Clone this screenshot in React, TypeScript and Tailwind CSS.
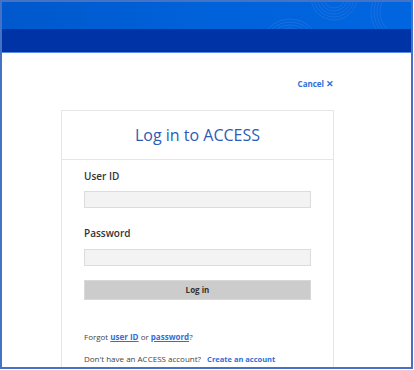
import React from 'react';

const Rings = () => (
  <svg className="absolute inset-0" width="409" height="27" viewBox="0 0 409 27">
    <g fill="none" stroke="#1a6fe0" strokeWidth="1">
      {[11, 14, 17, 20, 23].map((r) => (
        <circle key={`a${r}`} cx="332" cy="-5" r={r} />
      ))}
      {[20, 23, 26, 29].map((r) => (
        <circle key={`b${r}`} cx="288" cy="46" r={r} />
      ))}
      {[24, 27, 30, 33].map((r) => (
        <circle key={`c${r}`} cx="402" cy="10" r={r} />
      ))}
    </g>
  </svg>
);

export default function App() {
  return (
    <div className="w-[414px] h-[370px] bg-white overflow-hidden" style={{ fontFamily: '"Open Sans", sans-serif' }}>
      <div className="w-[413px] h-[369px] border-2 border-[#4472c4] flex flex-col overflow-hidden">
        {/* Header bands */}
        <div className="relative shrink-0 h-[27px] bg-gradient-to-r from-[#0058cc] via-[#0062da] to-[#0066e0] overflow-hidden">
          <Rings />
        </div>
        <div className="shrink-0 h-[23px] bg-[#0033a6]" />
        <div className="shrink-0 h-[1px] bg-[#5b8be0]" />

        {/* Content */}
        <div className="shrink-0 ml-[59px] w-[273px] flex flex-col">
          <div className="flex justify-end pt-[25px] pb-[20px]">
            <button className="text-[8px] font-bold text-[#2f6fd9] leading-[12px] flex items-center gap-[2px]">
              Cancel <span className="text-[9px]">✕</span>
            </button>
          </div>

          <div className="border border-[#e6e6e6] border-b-0">
            <div className="h-[49px] flex items-center justify-center border-b border-[#e6e6e6]">
              <h1 className="text-[16px] text-[#2b5cb8] leading-none">Log in to ACCESS</h1>
            </div>
            <div className="px-[22px] pt-[9px] pb-[10px]">
              <label className="block text-[10px] font-semibold text-[#333] leading-[14px]">User ID</label>
              <div className="mt-[8px] h-[17px] bg-[#f3f3f3] border border-[#dcdcdc]" />
              <label className="block mt-[18px] text-[10px] font-semibold text-[#333] leading-[14px]">Password</label>
              <div className="mt-[9px] h-[17px] bg-[#f3f3f3] border border-[#dcdcdc]" />
              <button className="mt-[14px] w-full h-[20px] bg-[#cccccc] border border-[#d8d8d8] text-[8px] font-bold text-[#333] leading-none">
                Log in
              </button>
              <p className="mt-[31px] text-[8px] text-[#444] leading-[12px]">
                Forgot{' '}
                <a className="font-bold text-[#2f6fd9] underline">user ID</a> or{' '}
                <a className="font-bold text-[#2f6fd9] underline">password</a>?
              </p>
              <p className="mt-[10px] text-[8px] text-[#444] leading-[12px]">
                Don't have an ACCESS account?{' '}
                <a className="ml-[4px] text-[7.5px] font-bold text-[#2f6fd9]">Create an account</a>
              </p>
            </div>
          </div>
        </div>
      </div>
    </div>
  );
}
